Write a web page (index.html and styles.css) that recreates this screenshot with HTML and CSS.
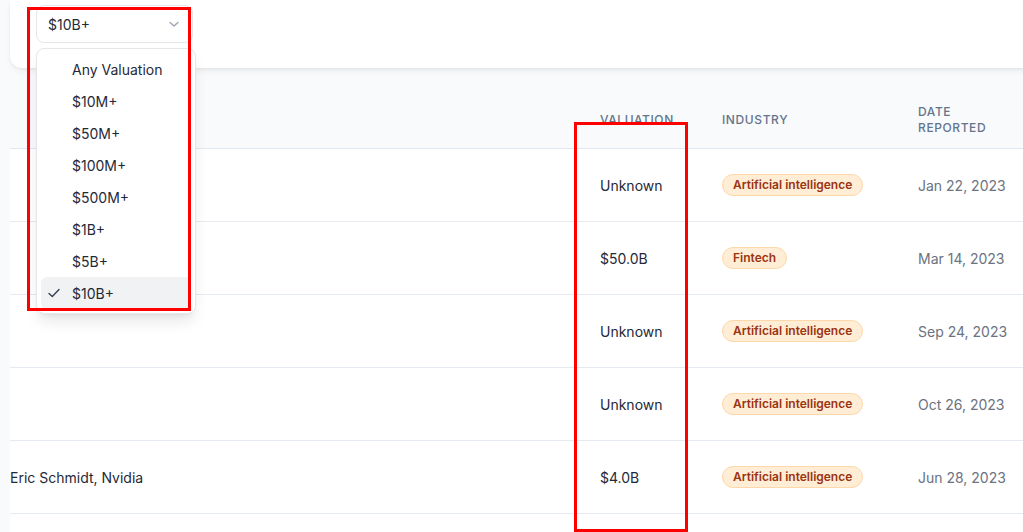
FILE: index.html
```html
<!DOCTYPE html>
<html lang="en">
<head>
<meta charset="utf-8">
<title>Deals</title>
<link rel="stylesheet" href="styles.css">
</head>
<body>
<div class="page">
  <div class="filter-card">
    <div class="select-wrap">
      <button class="select" type="button">
        <span>$10B+</span>
        <svg class="chev" width="12" height="12" viewBox="0 0 12 12"><path d="M2 4.5 L6 8 L10 4.5" fill="none" stroke="#9ca3af" stroke-width="1.3" stroke-linecap="round" stroke-linejoin="round"/></svg>
      </button>
      <ul class="menu">
        <li class="opt">Any Valuation</li>
        <li class="opt">$10M+</li>
        <li class="opt">$50M+</li>
        <li class="opt">$100M+</li>
        <li class="opt">$500M+</li>
        <li class="opt">$1B+</li>
        <li class="opt">$5B+</li>
        <li class="opt selected">
          <svg class="check" width="14" height="14" viewBox="0 0 14 14"><path d="M2 7.5 L5.3 10.6 L12 3.6" fill="none" stroke="#374151" stroke-width="1.4" stroke-linecap="round" stroke-linejoin="round"/></svg>
          $10B+
        </li>
      </ul>
    </div>
  </div>

  <div class="table-card">
    <div class="row head">
      <div class="cell first"></div>
      <div class="cell">VALUATION</div>
      <div class="cell">INDUSTRY</div>
      <div class="cell">DATE REPORTED</div>
    </div>
    <div class="row">
      <div class="cell first"></div>
      <div class="cell">Unknown</div>
      <div class="cell"><span class="badge">Artificial intelligence</span></div>
      <div class="cell date">Jan 22, 2023</div>
    </div>
    <div class="row">
      <div class="cell first"></div>
      <div class="cell">$50.0B</div>
      <div class="cell"><span class="badge">Fintech</span></div>
      <div class="cell date">Mar 14, 2023</div>
    </div>
    <div class="row">
      <div class="cell first"></div>
      <div class="cell">Unknown</div>
      <div class="cell"><span class="badge">Artificial intelligence</span></div>
      <div class="cell date">Sep 24, 2023</div>
    </div>
    <div class="row">
      <div class="cell first"></div>
      <div class="cell">Unknown</div>
      <div class="cell"><span class="badge">Artificial intelligence</span></div>
      <div class="cell date">Oct 26, 2023</div>
    </div>
    <div class="row">
      <div class="cell first">Eric Schmidt, Nvidia</div>
      <div class="cell">$4.0B</div>
      <div class="cell"><span class="badge">Artificial intelligence</span></div>
      <div class="cell date">Jun 28, 2023</div>
    </div>
    <div class="row">
      <div class="cell first"></div>
      <div class="cell"></div>
      <div class="cell"></div>
      <div class="cell date"></div>
    </div>
  </div>

  <div class="annot annot-menu"></div>
  <div class="annot annot-col"></div>
</div>
</body>
</html>
```

FILE: styles.css
```css
* { box-sizing: border-box; }
html, body {
  margin: 0;
  padding: 0;
  background: #f9fafb;
  overflow: hidden;
  height: 532px;
}
body {
  font-family: Inter, "Noto Sans", "Liberation Sans", sans-serif;
  font-size: 14px;
  color: #1f2937;
}
.page {
  position: relative;
  width: 1070px;
  padding-left: 10px;
}
.filter-card {
  background: #ffffff;
  height: 68px;
  padding: 5px 26px;
  border-radius: 0 0 12px 12px;
  box-shadow: 0 4px 8px -2px rgba(0,0,0,0.07), 0 1px 3px rgba(0,0,0,0.05);
  margin-bottom: 27px;
  position: relative;
  z-index: 2;
}
.select-wrap {
  position: relative;
  width: 157px;
}
.select {
  width: 157px;
  height: 38px;
  border: 1px solid #e5e7eb;
  border-radius: 8px;
  background: #fff;
  padding: 0 12px 0 11px;
  display: flex;
  align-items: center;
  justify-content: space-between;
  font: inherit;
  color: #1f2937;
}
.chev { display: block; }
.menu {
  position: absolute;
  top: 43px;
  left: 0;
  width: 160px;
  margin: 0;
  padding: 4px;
  list-style: none;
  background: #fff;
  border: 1px solid #e5e7eb;
  border-radius: 8px;
  box-shadow: 0 10px 15px -3px rgba(0,0,0,0.10), 0 4px 6px -4px rgba(0,0,0,0.08);
  z-index: 5;
}
.opt {
  height: 32px;
  display: flex;
  align-items: center;
  padding-left: 31px;
  border-radius: 6px;
  color: #1f2937;
  position: relative;
}
.opt.selected { background: #f1f2f4; }
.check {
  position: absolute;
  left: 6px;
  top: 9px;
}
.table-card {
  background: #ffffff;
  border-radius: 12px 0 0 0;
  overflow: hidden;
}
.row {
  display: grid;
  grid-template-columns: 566px 122px 196px 138px;
  height: 73px;
  border-bottom: 1px solid #e5e9f0;
  align-items: center;
}
.row.head {
  height: 54px;
  background: #f8fafc;
  border-bottom-color: #e2e8f0;
  font-size: 12px;
  line-height: 16px;
  font-weight: 500;
  letter-spacing: 0.05em;
  color: #64748b;
  padding-bottom: 4px;
}
.cell { padding: 0 24px; }
.cell.first { padding: 0; }
.date { color: #6b7280; }
.badge {
  display: inline-block;
  height: 22px;
  line-height: 20px;
  padding: 0 10px;
  border: 1px solid #fed7aa;
  background: #ffedd5;
  color: #9a3412;
  border-radius: 999px;
  font-size: 12px;
  font-weight: 600;
}
.annot {
  position: absolute;
  border: 3px solid #ff0000;
  z-index: 10;
  pointer-events: none;
}
.annot-menu { left: 27px; top: 7px; width: 164px; height: 304px; }
.annot-col { left: 574px; top: 122px; width: 114px; height: 410px; }
```
